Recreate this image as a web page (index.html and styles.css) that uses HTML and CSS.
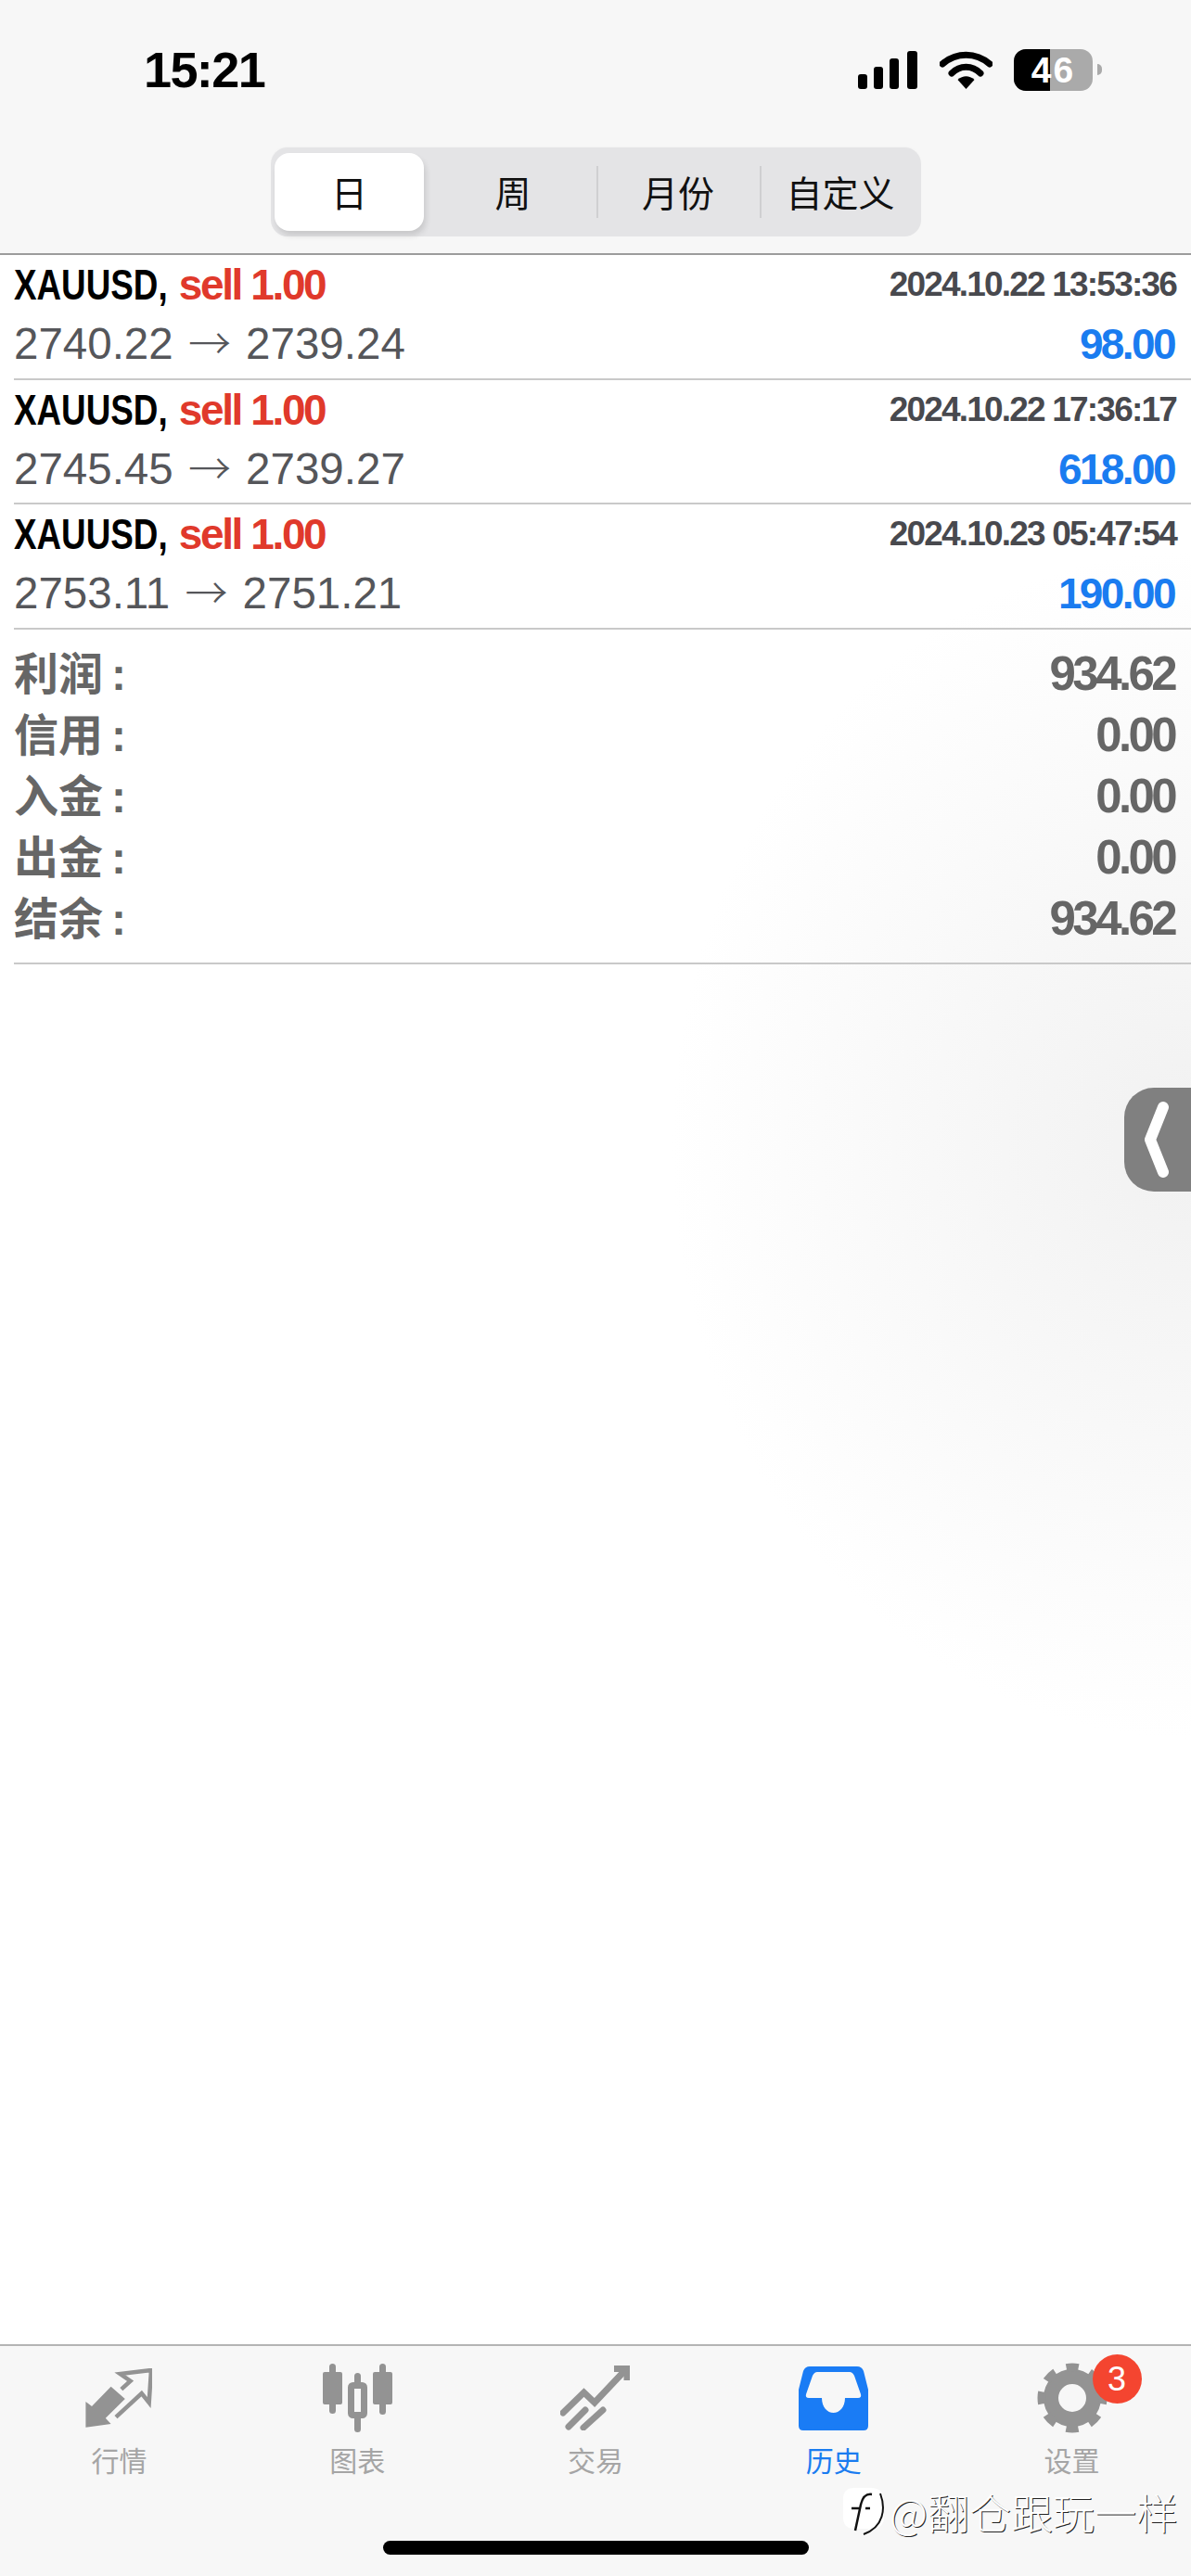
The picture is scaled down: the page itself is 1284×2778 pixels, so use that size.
FILE: index.html
```html
<!DOCTYPE html>
<html lang="zh-CN">
<head>
    <meta charset="UTF-8">
    <meta name="viewport" content="width=device-width, initial-scale=1.0">
    <title>历史</title>
    <link rel="stylesheet" href="styles.css">
</head>
<body>
    <header class="top">
        <div class="status-bar">
            <span class="clock">15:21</span>
            <div class="status-icons">
                <svg class="signal" width="64" height="41" viewBox="0 0 64 41">
                    <rect x="0" y="25" width="10" height="16" rx="3"/>
                    <rect x="17" y="17" width="10" height="24" rx="3"/>
                    <rect x="34" y="8" width="10" height="33" rx="3"/>
                    <rect x="53" y="0" width="11" height="41" rx="3"/>
                </svg>
                <svg class="wifi" width="57" height="41" viewBox="0 0 57 41">
                    <path d="M3 14 C18 1 39 1 54 14" fill="none" stroke="#000" stroke-width="7" stroke-linecap="round"/>
                    <path d="M13 24 C22 15 35 15 44 24" fill="none" stroke="#000" stroke-width="7" stroke-linecap="round"/>
                    <path d="M19.5 31 C25 26 32 26 37.5 31 L28.5 41 Z"/>
                </svg>
                <div class="battery">
                    <div class="battery-body"><span class="battery-level"></span><span class="battery-text">46</span></div>
                    <span class="battery-nub"></span>
                </div>
            </div>
        </div>
        <div class="segments">
            <div class="segment active">日</div>
            <div class="segment week">周</div>
            <div class="segment divided">月份</div>
            <div class="segment divided">自定义</div>
        </div>
    </header>

    <main class="content">
        <div class="trade">
            <div class="trade-title"><span class="symbol">XAUUSD,</span> <span class="side">sell 1.00</span></div>
            <div class="trade-time">2024.10.22 13:53:36</div>
            <div class="trade-price">2740.22 <span class="arrow">→</span> 2739.24</div>
            <div class="trade-profit">98.00</div>
        </div>
        <div class="trade">
            <div class="trade-title"><span class="symbol">XAUUSD,</span> <span class="side">sell 1.00</span></div>
            <div class="trade-time">2024.10.22 17:36:17</div>
            <div class="trade-price">2745.45 <span class="arrow">→</span> 2739.27</div>
            <div class="trade-profit">618.00</div>
        </div>
        <div class="trade">
            <div class="trade-title"><span class="symbol">XAUUSD,</span> <span class="side">sell 1.00</span></div>
            <div class="trade-time">2024.10.23 05:47:54</div>
            <div class="trade-price">2753.11 <span class="arrow">→</span> 2751.21</div>
            <div class="trade-profit">190.00</div>
        </div>

        <div class="summary">
            <div class="summary-row"><span class="summary-label">利润<i class="colon">:</i></span><span class="summary-value">934.62</span></div>
            <div class="summary-row"><span class="summary-label">信用<i class="colon">:</i></span><span class="summary-value">0.00</span></div>
            <div class="summary-row"><span class="summary-label">入金<i class="colon">:</i></span><span class="summary-value">0.00</span></div>
            <div class="summary-row"><span class="summary-label">出金<i class="colon">:</i></span><span class="summary-value">0.00</span></div>
            <div class="summary-row"><span class="summary-label">结余<i class="colon">:</i></span><span class="summary-value">934.62</span></div>
        </div>
    </main>

    <footer class="tabbar">
        <nav class="tabs">
            <div class="tab">
                <div class="tab-icon">
                    <svg width="72" height="65" viewBox="0 0 72 65">
                        <path d="M0.4 63.7 V36 L7 41 L27.6 19.7 L42.8 33 L21.8 53.7 L27.6 60 Z" fill="#939393"/>
                        <path d="M33 52.7 L60.7 27 L68.7 37 L71 2 L37.5 6 L48.6 13.7 L38.8 22.7" fill="none" stroke="#939393" stroke-width="4.5"/>
                    </svg>
                </div>
                <span class="tab-label">行情</span>
            </div>
            <div class="tab">
                <div class="tab-icon">
                    <svg width="75" height="74" viewBox="0 0 75 74" fill="#939393">
                        <rect x="7" y="0" width="7" height="54" rx="3.5"/>
                        <rect x="0" y="9" width="21" height="35" rx="2"/>
                        <rect x="34" y="10" width="7" height="64" rx="3.5"/>
                        <rect x="30.5" y="23.5" width="14" height="32" rx="2" fill="#f7f7f7" stroke="#939393" stroke-width="7"/>
                        <rect x="61" y="0" width="7" height="55" rx="3.5"/>
                        <rect x="54" y="9" width="21" height="35" rx="2"/>
                    </svg>
                </div>
                <span class="tab-label">图表</span>
            </div>
            <div class="tab">
                <div class="tab-icon">
                    <svg width="75" height="70" viewBox="0 0 75 70" fill="none" stroke="#939393" stroke-width="7" stroke-linecap="round">
                        <path d="M3 51 L25.5 29 L37 40 L71 4"/>
                        <path d="M58 3.5 H72 V16" stroke-linecap="butt"/>
                        <path d="M9 66 L27 48"/>
                        <path d="M25 67 L46 48"/>
                    </svg>
                </div>
                <span class="tab-label">交易</span>
            </div>
            <div class="tab tab-active">
                <div class="tab-icon">
                    <svg width="75" height="69" viewBox="0 0 75 69">
                        <path fill="#1a7cf5" fill-rule="evenodd" d="M12 0 H63 Q68 0 70 5 L75 25 V64 Q75 69 70 69 H5 Q0 69 0 64 V25 L5 5 Q7 0 12 0 Z M20 6 H55 Q58 6 60 10 L67 30 Q68 34 64 34 H50 C50 44 44 50 37.5 50 C31 50 25 44 25 34 H11 Q7 34 8 30 L15 10 Q17 6 20 6 Z"/>
                    </svg>
                </div>
                <span class="tab-label">历史</span>
            </div>
            <div class="tab">
                <div class="tab-icon">
                    <svg width="76" height="76" viewBox="0 0 76 76" fill="none" stroke="#939393">
                        <circle cx="38" cy="38" r="23" stroke-width="16"/>
                        <circle cx="38" cy="38" r="33" stroke-width="9" stroke-dasharray="13 12.9" stroke-dashoffset="6.5"/>
                    </svg>
                    <span class="badge">3</span>
                </div>
                <span class="tab-label">设置</span>
            </div>
        </nav>
        <div class="home-bar"></div>
    </footer>

    <div class="side-handle">
        <svg width="30" height="82" viewBox="0 0 30 82">
            <path d="M22 6 L8 41 L22 76" fill="none" stroke="#fff" stroke-width="12" stroke-linecap="round" stroke-linejoin="round"/>
        </svg>
    </div>

    <div class="watermark">
        <svg width="46" height="52" viewBox="0 0 46 52">
            <path d="M12 0 H30 Q44 0 44 14 V32 Q44 44 30 44 H12 Q0 44 0 32 V12 Q0 0 12 0 Z" fill="#fff"/>
            <path d="M31 7 C24 6 21 10 19 18 L13 46" fill="none" stroke="#111" stroke-width="2.5"/>
            <path d="M9 22 H17 M24 22 H29" fill="none" stroke="#111" stroke-width="2.5"/>
            <path d="M40 6 C46 22 44 42 22 50" fill="none" stroke="#111" stroke-width="2"/>
        </svg>
        <span class="watermark-text">@翻仓跟玩一样</span>
    </div>
</body>
</html>
```

FILE: styles.css
```css
* {
    box-sizing: border-box;
}
html, body {
    margin: 0;
    padding: 0;
}
body {
    position: relative;
    display: flex;
    flex-direction: column;
    width: 1284px;
    height: 2778px;
    overflow: hidden;
    background: #fff;
    font-family: "Liberation Sans", "Noto Sans CJK SC", sans-serif;
}

/* top bar */
.top {
    height: 275px;
    padding-top: 53px;
    background: #f7f7f7;
    border-bottom: 2px solid #9c9c9c;
}
.status-bar {
    display: flex;
    justify-content: space-between;
    align-items: center;
    height: 44px;
    padding: 0 96px 0 155px;
}
.clock {
    font-size: 54px;
    font-weight: 700;
    line-height: 44px;
    letter-spacing: -1.6px;
    color: #000;
}
.status-icons {
    display: flex;
    align-items: center;
    gap: 24px;
}
.signal {
    fill: #000;
}
.wifi {
    margin-right: -1px;
}
.battery {
    display: flex;
    align-items: center;
    gap: 5px;
}
.battery-body {
    position: relative;
    width: 85px;
    height: 45px;
    border-radius: 13px;
    overflow: hidden;
    background: #aaa;
    color: #fff;
    font-size: 39px;
    font-weight: 700;
    letter-spacing: 2px;
    line-height: 45px;
    text-align: center;
}
.battery-level {
    position: absolute;
    left: 0;
    top: 0;
    bottom: 0;
    width: 39px;
    background: #000;
}
.battery-text {
    position: relative;
}
.battery-nub {
    width: 5px;
    height: 12px;
    border-radius: 0 5px 5px 0;
    background: #aaa;
}

.segments {
    display: grid;
    grid-template-columns: 175px 176px 176px 174px;
    width: 701px;
    height: 96px;
    margin: 62px 0 0 292px;
    border-radius: 18px;
    background: #e4e4e6;
    box-shadow: 0 -1px 2px rgba(0,0,0,0.02);
}
.segment {
    display: flex;
    align-items: center;
    justify-content: center;
    position: relative;
    padding-bottom: 3px;
    font-size: 39px;
    color: #111;
}
.segment.active {
    margin: 6px 10px 6px 4px;
    border-radius: 16px;
    background: #fff;
    box-shadow: 2px 5px 6px rgba(0,0,0,0.12);
}
.segment.week {
    padding-right: 4px;
}
.segment.divided::before {
    content: "";
    position: absolute;
    left: 0;
    top: 20px;
    bottom: 20px;
    width: 2px;
    background: #cfcfd1;
}

/* trades */
.content {
    flex: 1;
    background: radial-gradient(ellipse 560px 640px at 100% 960px, #f1f1f1 0%, #f8f8f8 50%, #ffffff 100%);
}
.trade {
    display: grid;
    grid-template-columns: 1fr auto;
    grid-template-rows: 64px 64px;
    align-items: center;
    height: 134.67px;
    margin-left: 15px;
    padding-right: 16px;
    border-bottom: 2px solid #c9c9c9;
}
.trade-title {
    font-size: 46px;
    font-weight: 700;
    line-height: 64px;
}
.symbol {
    display: inline-block;
    margin-right: -41px;
    transform: scaleX(0.8);
    transform-origin: left center;
    color: #000;
}
.side {
    margin-left: -1px;
    letter-spacing: -2.4px;
    color: #e0392b;
}
.trade-time {
    justify-self: end;
    font-size: 37px;
    font-weight: 700;
    letter-spacing: -1.8px;
    color: #48494e;
}
.trade-price {
    font-size: 47.5px;
    line-height: 64px;
    color: #55565a;
}
.arrow {
    margin: 0 3px;
    font-family: "Noto Sans CJK SC", sans-serif;
    font-size: 46px;
    font-weight: 300;
    line-height: 1;
}
.trade-profit {
    justify-self: end;
    margin-right: 2px;
    font-size: 46px;
    font-weight: 700;
    letter-spacing: -2.6px;
    color: #1a7cf0;
}

/* totals */
.summary {
    margin-left: 15px;
    padding: 11px 16px 18px 0;
    border-bottom: 2px solid #c9c9c9;
}
.summary-row {
    display: flex;
    justify-content: space-between;
    align-items: center;
    height: 66px;
    color: #666;
}
.summary-label {
    font-size: 48px;
    font-weight: 700;
}
.colon {
    margin-left: 9px;
    font-style: normal;
}
.summary-value {
    padding-top: 8px;
    margin-right: 2px;
    font-size: 51px;
    font-weight: 700;
    letter-spacing: -3.6px;
}

/* bottom tabs */
.tabbar {
    height: 250px;
    padding-top: 18px;
    background: #f7f7f7;
    border-top: 2px solid #b4b4b4;
}
.tabs {
    display: grid;
    grid-template-columns: repeat(5, 1fr);
}
.tab {
    display: flex;
    flex-direction: column;
    align-items: center;
}
.tab-icon {
    position: relative;
    display: flex;
    align-items: center;
    justify-content: center;
    height: 76px;
}
.tab-label {
    margin-top: 14px;
    font-size: 30px;
    line-height: 34px;
    color: #a5a5a5;
}
.tab-active .tab-label {
    color: #1a7cf0;
}
.badge {
    position: absolute;
    left: 60px;
    top: -9px;
    width: 53px;
    height: 53px;
    border-radius: 50%;
    background: #f44530;
    color: #fff;
    font-size: 36px;
    line-height: 53px;
    text-align: center;
}
.home-bar {
    width: 459px;
    height: 15px;
    margin: 68px auto 0;
    border-radius: 8px;
    background: #000;
}

/* overlays */
.side-handle {
    position: absolute;
    right: 0;
    top: 1173px;
    display: flex;
    align-items: center;
    width: 72px;
    height: 112px;
    padding-left: 20px;
    border-radius: 32px 0 0 32px;
    background: #808080;
}
.watermark {
    position: absolute;
    left: 909px;
    top: 2683px;
    display: flex;
    align-items: center;
    gap: 4px;
}
.watermark-text {
    font-family: "Noto Sans CJK SC", sans-serif;
    font-size: 45px;
    font-weight: 300;
    line-height: 52px;
    color: #fff;
    text-shadow: 1px 1px 0 #222;
}
```
